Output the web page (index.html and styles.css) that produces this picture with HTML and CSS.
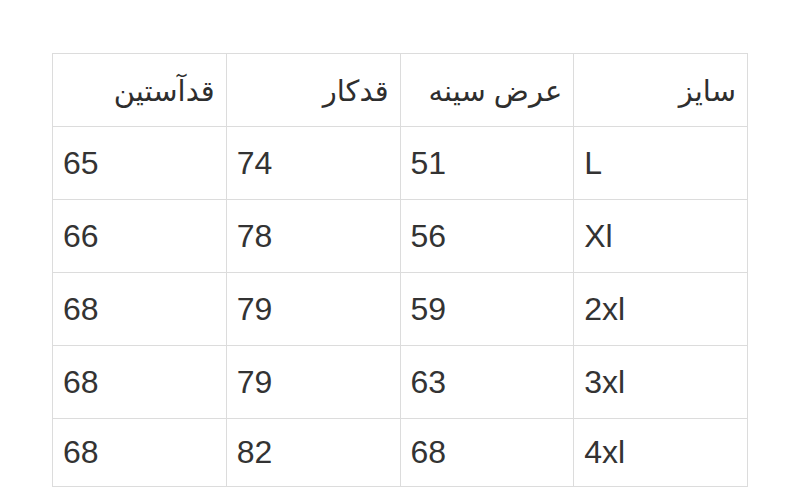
FILE: index.html
```html
<!DOCTYPE html>
<html lang="fa">
<head>
<meta charset="utf-8">
<title>جدول سایز</title>
<link rel="stylesheet" href="styles.css">
</head>
<body>
<table class="size-table" dir="rtl">
  <thead>
    <tr class="head-row">
      <th>سایز</th>
      <th>عرض سینه</th>
      <th>قدکار</th>
      <th>قدآستین</th>
    </tr>
  </thead>
  <tbody>
    <tr class="row"><td>L</td><td>51</td><td>74</td><td>65</td></tr>
    <tr class="row"><td>Xl</td><td>56</td><td>78</td><td>66</td></tr>
    <tr class="row"><td>2xl</td><td>59</td><td>79</td><td>68</td></tr>
    <tr class="row"><td>3xl</td><td>63</td><td>79</td><td>68</td></tr>
    <tr class="row last"><td>4xl</td><td>68</td><td>82</td><td>68</td></tr>
  </tbody>
</table>
</body>
</html>
```
FILE: styles.css
```css
html, body {
  margin: 0;
  background: #ffffff;
}
body {
  padding: 53px 52px 0 52px;
  font-family: "Liberation Sans", "DejaVu Sans", sans-serif;
  color: #333333;
}
.size-table {
  width: 696px;
  border-collapse: collapse;
  table-layout: fixed;
}
.size-table th,
.size-table td {
  border: 1px solid #dcdcdc;
  vertical-align: middle;
  padding: 0;
}
.size-table th {
  height: 73px;
  font-weight: normal;
  font-size: 29px;
  text-align: right;
  padding-right: 11px;
  padding-top: 2px;
  box-sizing: border-box;
  color: #2e2e2e;
}
.size-table td {
  height: 72px;
  font-size: 32px;
  text-align: left;
  padding-left: 10px;
  direction: ltr;
}
.size-table .last td {
  height: 67px;
}
```
